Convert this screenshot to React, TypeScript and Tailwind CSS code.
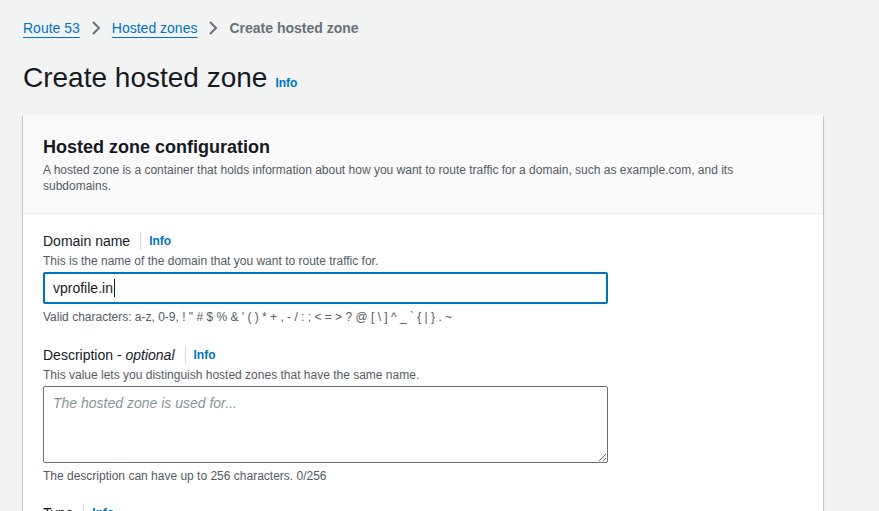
import React from "react";

const Chevron = () => (
  <svg width="16" height="16" viewBox="0 0 16 16" className="mx-[8px] shrink-0">
    <polyline points="5,2 11,8 5,14" fill="none" stroke="#687078" strokeWidth="2" />
  </svg>
);

const InfoLink = () => (
  <span className="ml-[10px] border-l border-[#d5dbdb] pl-[8px] text-[12px] font-bold leading-[18px] text-[#0073bb]">
    Info
  </span>
);

export default function App() {
  return (
    <div
      className="min-h-[511px] w-full bg-[#f2f3f3] pl-[23px] pr-[56px] pt-[18px] text-[#16191f]"
      style={{ fontFamily: '"Liberation Sans", Arial, sans-serif' }}
    >
      <nav className="flex h-[20px] items-center text-[14px] leading-[20px]">
        <span className="text-[#0073bb] underline underline-offset-[4px]">Route 53</span>
        <Chevron />
        <span className="text-[#0073bb] underline underline-offset-[4px]">Hosted zones</span>
        <Chevron />
        <span className="font-bold text-[#687078]">Create hosted zone</span>
      </nav>

      <div className="mt-[22px] flex items-baseline">
        <h1 className="text-[28px] leading-[36px] font-normal">Create hosted zone</h1>
        <span className="ml-[8px] text-[12px] font-bold text-[#0073bb]">Info</span>
      </div>

      <div className="mt-[19px] w-[800px] bg-white shadow-[0_1px_1px_0_rgba(0,28,36,0.3),1px_1px_1px_0_rgba(0,28,36,0.15),-1px_1px_1px_0_rgba(0,28,36,0.15)]">
        <div className="border-b border-[#eaeded] bg-[#fafafa] px-[20px] pt-[21px] pb-[19px]">
          <h2 className="text-[18px] font-bold leading-[22px]">Hosted zone configuration</h2>
          <p className="mt-[4px] text-[12px] leading-[16px] text-[#545b64]">
            A hosted zone is a container that holds information about how you want to route traffic for a domain, such as example.com, and its subdomains.
          </p>
        </div>

        <div className="px-[20px] pt-[17px] pb-[20px]">
          <div className="flex items-center text-[14px] leading-[20px]">
            <span>Domain name</span>
            <InfoLink />
          </div>
          <p className="mt-[2px] text-[12px] leading-[16px] text-[#545b64]">
            This is the name of the domain that you want to route traffic for.
          </p>
          <div className="mt-[3px] flex h-[32px] w-[565px] items-center rounded-[2px] border-2 border-[#0073bb] bg-white pl-[8px] text-[14px]">
            <span>vprofile.in</span>
            <span className="ml-[1px] h-[18px] w-[1px] bg-[#16191f]" />
          </div>
          <p className="mt-[5px] text-[12px] leading-[16px] text-[#545b64]">
            {"Valid characters: a-z, 0-9, ! \" # $ % & ' ( ) * + , - / : ; < = > ? @ [ \\ ] ^ _ ` { | } . ~"}
          </p>

          <div className="mt-[20px] flex items-center text-[14px] leading-[20px]">
            <span>
              Description - <i>optional</i>
            </span>
            <InfoLink />
          </div>
          <p className="mt-[2px] text-[12px] leading-[16px] text-[#545b64]">
            This value lets you distinguish hosted zones that have the same name.
          </p>
          <textarea
            className="mt-[3px] block h-[77px] w-[565px] rounded-[2px] border border-[#687078] bg-white px-[9px] pt-[6px] text-[14px] leading-[20px] placeholder:italic placeholder:text-[#879596] outline-none"
            placeholder="The hosted zone is used for..."
          />
          <p className="mt-[5px] text-[12px] leading-[16px] text-[#545b64]">
            The description can have up to 256 characters. 0/256
          </p>

          <div className="mt-[19px] flex items-center text-[14px] leading-[20px]">
            <span>Type</span>
            <InfoLink />
          </div>
          <div className="h-[60px]" />
        </div>
      </div>
    </div>
  );
}
